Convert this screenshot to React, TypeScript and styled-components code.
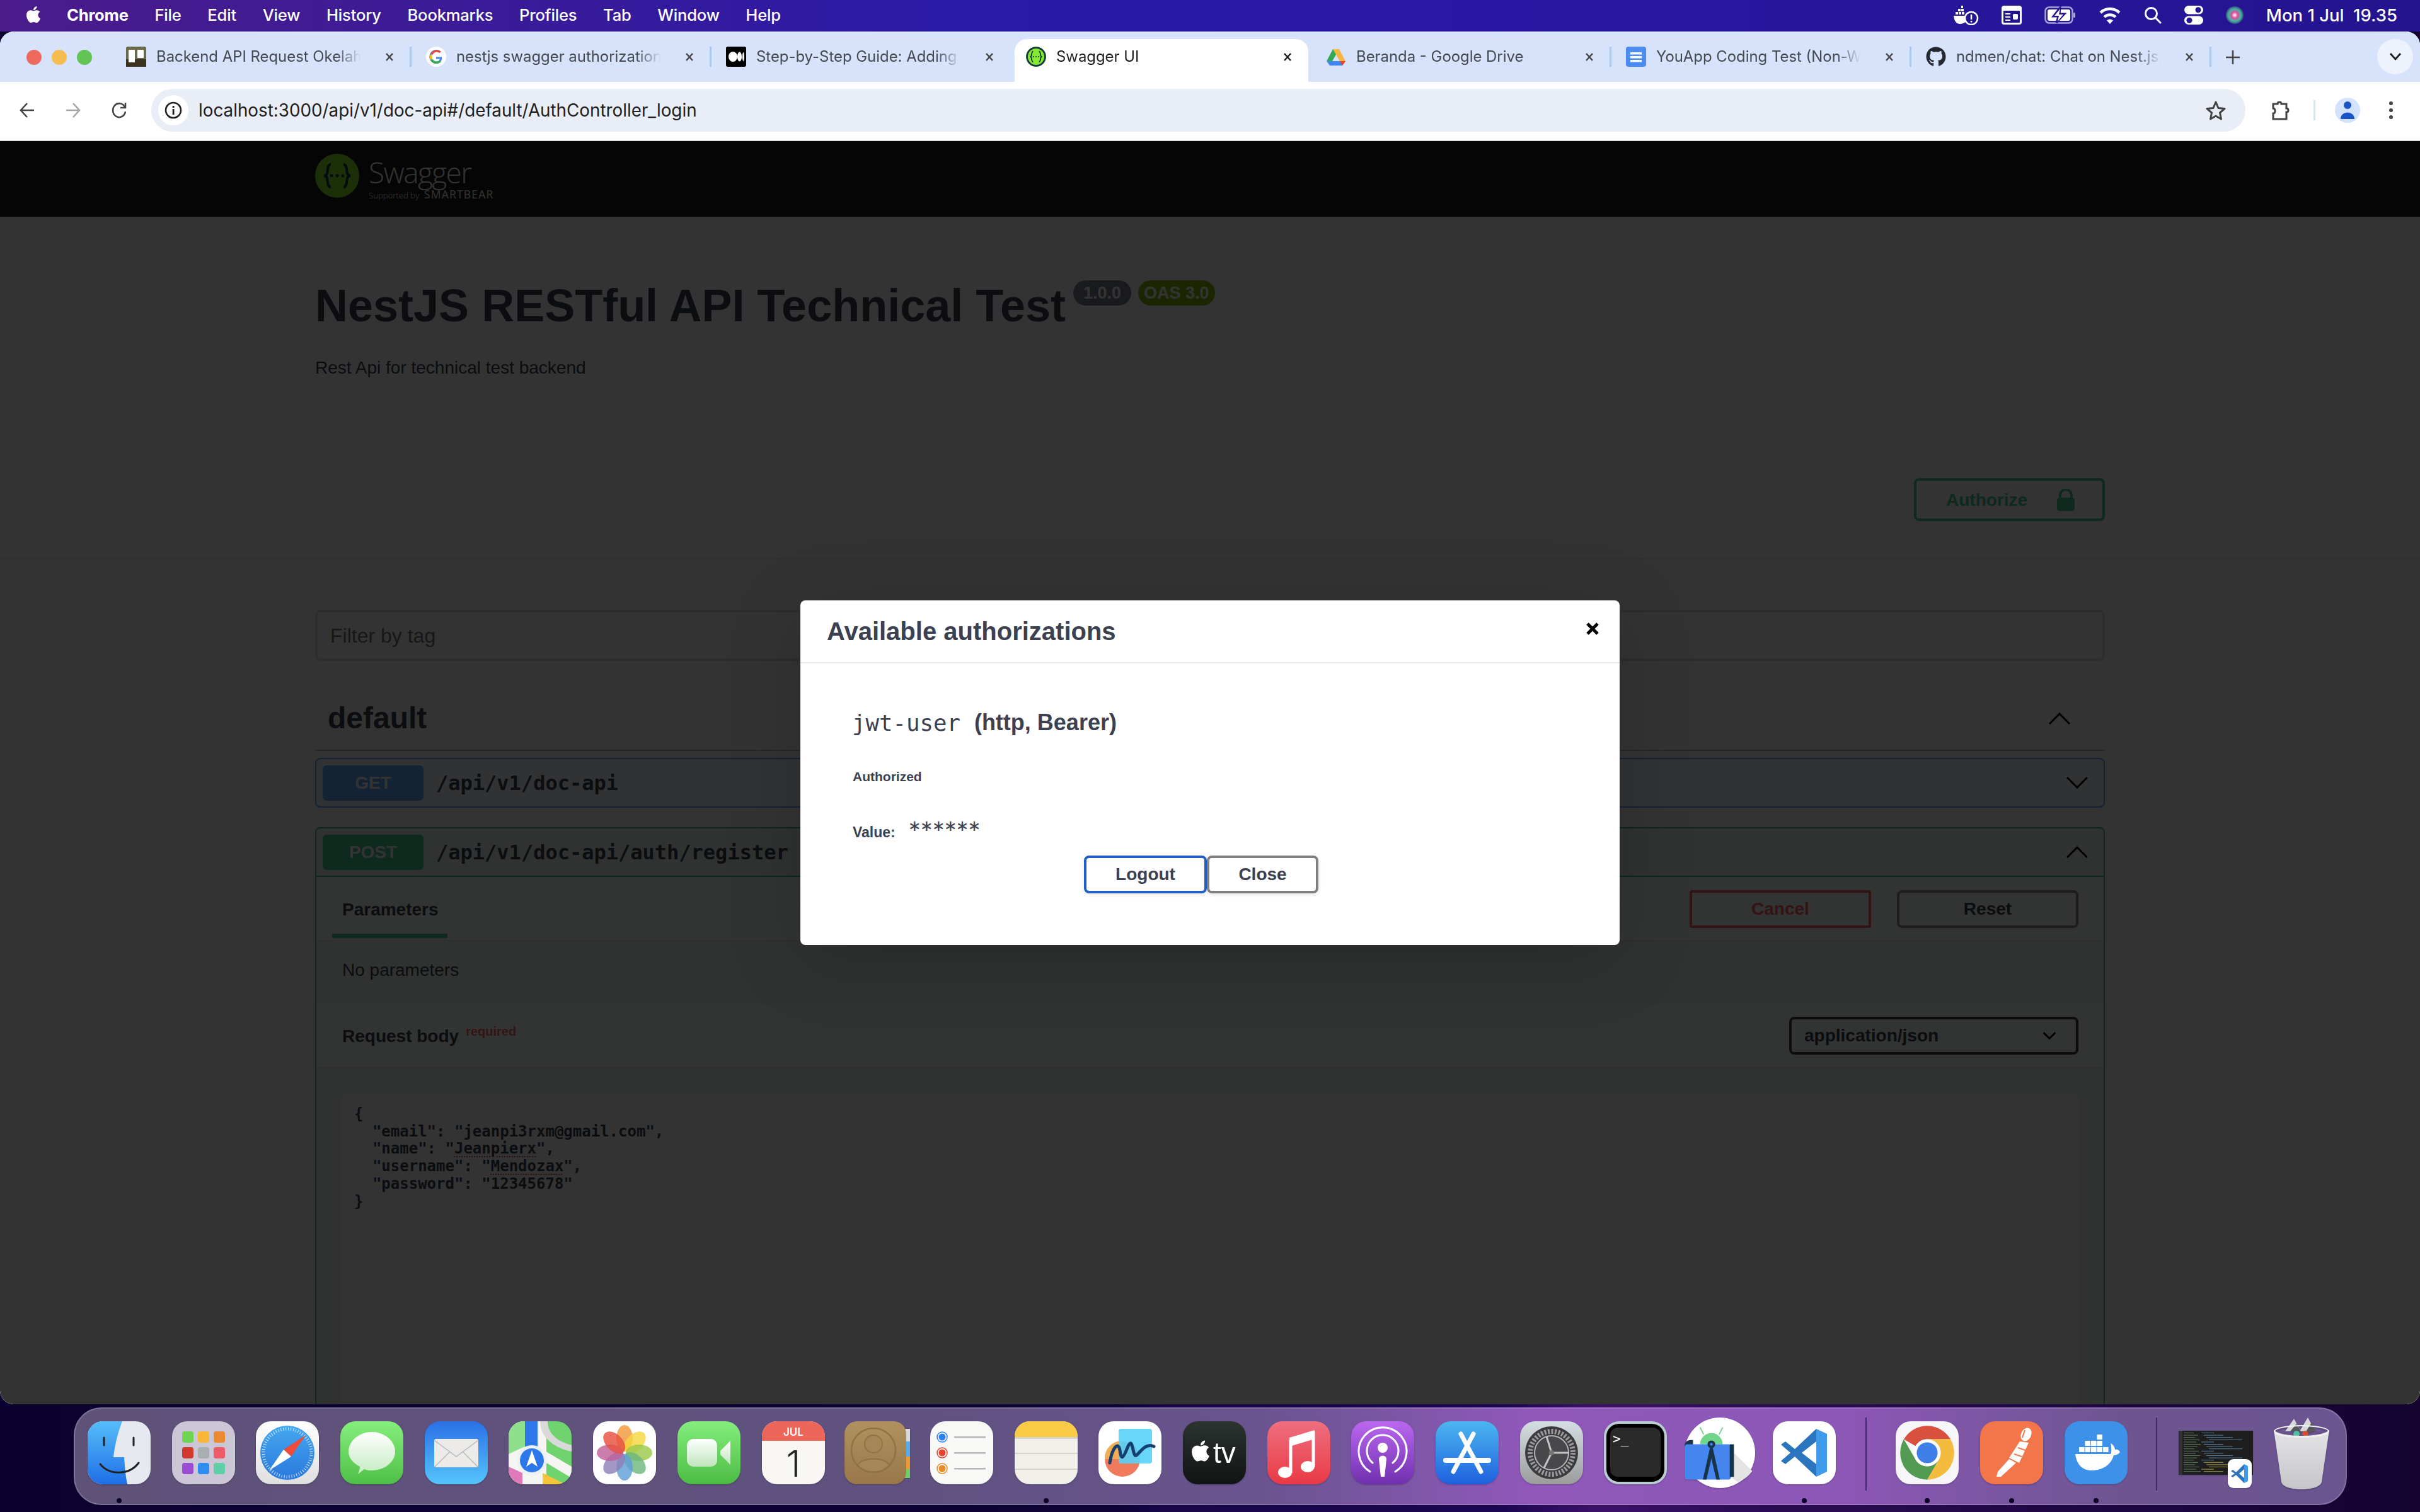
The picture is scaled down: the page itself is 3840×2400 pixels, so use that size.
import React from "react";
import styled, { createGlobalStyle } from "styled-components";
import { FaApple, FaGithub } from "react-icons/fa";

const Global = createGlobalStyle`
  html, body { margin: 0; padding: 0; background: #0c0230; }
  * { box-sizing: border-box; }
`;
const SANS = `"Liberation Sans", Arial, sans-serif`;
const UI = `Inter, "Liberation Sans", sans-serif`;
const MONO = `"DejaVu Sans Mono", "Liberation Mono", monospace`;

const Desktop = styled.div`
  width: 3840px; height: 2400px; overflow: hidden; display: flex; flex-direction: column;
  background: linear-gradient(90deg, #0b0230 0%, #0d0335 46%, #170648 48%, #1a0750 62%, #3c1168 66%, #2c0c55 72%, #1a0640 90%, #14042f 100%);
`;
const MenuBar = styled.header`
  height: 50px; flex: none; display: flex; align-items: center; padding: 0 36px 3px 40px; color: #fff;
  font: 500 25.6px ${UI};
  background: linear-gradient(90deg, #4b1b8a 0%, #3a1b99 20%, #2a1aa6 40%, #2a18a5 60%, #24148f 100%);
`;
const AppleMark = styled.span` width: 26px; height: 32px; display: flex; margin-right: 40px; font-size: 30px; `;
const MenuItems = styled.nav` display: flex; gap: 41.7px; letter-spacing: -0.2px; `;
const MenuItem = styled.span<{ $strong?: boolean }>` font-weight: ${p => (p.$strong ? 700 : 500)}; `;
const StatusArea = styled.div` margin-left: auto; display: flex; align-items: center; gap: 36px; `;
const Clock = styled.span` white-space: pre; font-size: 27.5px; `;
const StatusSvg = styled.svg` display: block; flex: none; `;

const Window = styled.div`
  height: 2179px; flex: none; display: flex; flex-direction: column; overflow: hidden;
  border-radius: 22px 22px 22px 22px; background: #fff;
`;
const TabStrip = styled.div`
  height: 80px; flex: none; display: flex; align-items: flex-start; background: #d6e3fb; padding: 12px 0 0 42px;
`;
const Lights = styled.div` width: 135px; height: 58px; display: flex; gap: 16px; align-items: center; `;
const Light = styled.span<{ $c: string }>` width: 24px; height: 24px; border-radius: 50%; background: ${p => p.$c}; `;
const Tab = styled.div<{ $active?: boolean }>`
  flex: none; height: 68px; display: flex; align-items: flex-start; padding-top: 12px;
  width: ${p => (p.$active ? "466px" : "476px")};
  padding-left: ${p => (p.$active ? "18px" : "23px")};
  margin: ${p => (p.$active ? "0 5px 0 5px" : "0")};
  background: ${p => (p.$active ? "#fff" : "transparent")};
  border-radius: 20px 20px 0 0;
  color: ${p => (p.$active ? "#1f1f1f" : "#454a52")};
  font: 400 23.9px/32px ${UI};
`;
const Favicon = styled.span` width: 32px; height: 32px; flex: none; display: block; `;
const TabTitle = styled.span`
  width: 325px; margin-left: 16px; white-space: nowrap; overflow: hidden; flex: none;
  -webkit-mask-image: linear-gradient(90deg, #000 88%, transparent 100%);
  mask-image: linear-gradient(90deg, #000 88%, transparent 100%);
`;
const TabClose = styled.svg<{ $ml: number }>` width: 20px; height: 32px; margin-left: ${p => p.$ml}px; flex: none; `;
const TabSep = styled.span` width: 3px; height: 32px; margin-left: auto; background: #aac7f2; flex: none; `;
const NewTab = styled.svg` width: 24px; height: 32px; margin: 12px 0 0 22px; flex: none; `;
const TabSearch = styled.div`
  margin: 0 11px 0 auto; width: 57px; height: 56px; border-radius: 28px; background: #edf2fc;
  display: flex; align-items: center; justify-content: center;
`;
const Toolbar = styled.div`
  height: 94px; flex: none; display: flex; align-items: center; padding: 0 32px 2px 31px;
  background: #fff; border-bottom: 2px solid #e1e1e1;
`;
const ToolIcon = styled.svg<{ $ml?: number }>` flex: none; display: block; margin-left: ${p => p.$ml ?? 0}px; `;
const AddressBar = styled.div`
  margin-left: 39px; width: 3323px; height: 68px; border-radius: 34px; background: #e9edf6; flex: none;
  display: flex; align-items: center; padding: 0 30px 0 11px;
`;
const InfoPill = styled.span`
  width: 48px; height: 48px; border-radius: 50%; background: #fff; flex: none;
  display: flex; align-items: center; justify-content: center;
`;
const Url = styled.span` margin-left: 16px; font: 400 27.8px ${UI}; color: #1f1f1f; flex: 1; white-space: nowrap; `;
const VSep = styled.span` width: 3px; height: 32px; background: #d3e3fd; margin-left: 38px; flex: none; `;
const Avatar = styled.span`
  width: 40px; height: 40px; border-radius: 50%; background: #d3e3fd; margin-left: 31px; flex: none;
  display: flex; align-items: center; justify-content: center;
`;

const Page = styled.main` flex: 1; position: relative; overflow: hidden; background: #fff; font-family: ${SANS}; color: #3b4151; `;
const TopBar = styled.div` height: 120px; background: #1b1b1b; `;
const Wrap = styled.div` width: 2840px; margin: 0 auto; `;
const TopBarInner = styled(Wrap)` display: flex; padding-top: 20px; `;
const LogoWords = styled.div` margin-left: 15px; display: flex; flex-direction: column; color: #fff; font-family: "Open Sans", sans-serif; font-weight: 300; padding-top: 4px; `;
const LogoName = styled.span` font-size: 46px; line-height: 50px; letter-spacing: -1.6px; `;
const LogoSub = styled.span` display: flex; align-items: baseline; gap: 8px; font-size: 13.5px; line-height: 20px; letter-spacing: -0.2px; `;
const LogoBrand = styled.span` font-size: 17.5px; letter-spacing: 1.2px; font-weight: 400; `;
const TitleRow = styled.div` display: flex; align-items: flex-start; padding-top: 101px; `;
const Title = styled.h2` margin: 0; font: 700 72px/80px ${SANS}; color: #3b4151; `;
const Badge = styled.span<{ $bg: string; $pad: number; $ml: number }>`
  height: 40px; border-radius: 20px; background: ${p => p.$bg}; color: #fff; font: 700 27px/40px ${SANS};
  padding: 0 ${p => p.$pad}px; margin-left: ${p => p.$ml}px;
`;
const Desc = styled.p` margin: 39px 0 0; font: 400 28px/40px ${SANS}; color: #3b4151; `;
const Schemes = styled.section` height: 284px; padding-top: 155px; border-bottom: 2px solid #efefef; `;
const SchemesInner = styled(Wrap)` display: flex; justify-content: flex-end; `;
const AuthorizeBtn = styled.div`
  width: 303px; height: 68px; border: 4px solid #49cc90; border-radius: 8px; color: #49cc90;
  font: 700 28px ${SANS}; display: flex; align-items: center; padding: 2px 0 0 47px;
`;
const AuthLock = styled.svg` margin-left: 46px; flex: none; `;
const Filter = styled.div`
  margin-top: 80px; height: 81px; border: 4px solid #dfe2e8; border-radius: 8px; padding: 2px 0 0 20px;
  display: flex; align-items: center; font: 400 32px ${SANS}; color: #757575;
`;
const TagRow = styled.div`
  display: flex; justify-content: space-between; align-items: center; padding: 64px 55px 23px 20px;
  border-bottom: 2px solid #c4c6cb; height: 143px;
`;
const TagName = styled.h3` margin: 0; font: 700 48px/56px ${SANS}; `;
const Op = styled.section<{ $c: string; $tint: string; $mt: number }>`
  margin-top: ${p => p.$mt}px; border: 2px solid ${p => p.$c}; border-radius: 8px; background: ${p => p.$tint};
`;
const OpSummary = styled.div<{ $c?: string }>`
  height: ${p => (p.$c ? 77 : 75)}px; display: flex; align-items: center; padding: 0 25px 0 10px;
  border-bottom: ${p => (p.$c ? `2px solid ${p.$c}` : "none")};
`;
const Method = styled.span<{ $bg: string }>`
  width: 160px; height: 56px; border-radius: 6px; background: ${p => p.$bg}; color: #fff;
  font: 700 28px/56px ${SANS}; text-align: center;
`;
const OpPath = styled.span` margin-left: 20px; font: 700 32px ${MONO}; flex: 1; `;
const SectionHead = styled.div`
  height: 102px; background: rgba(255,255,255,.8); display: flex; padding-right: 40px; border-bottom: 2px solid #e8ebe9;
`;
const ParamTab = styled.div`
  margin-left: 25px; width: 183px; height: 97px; border-bottom: 7px solid #49cc90; padding: 14px 0 0 16px;
  font: 700 28px/76px ${SANS};
`;
const BtnGroup = styled.div` margin-left: auto; padding-top: 21px; display: flex; gap: 41px; `;
const OutlineBtn = styled.div<{ $c: string; $text: string; $r: number }>`
  width: 288px; height: 60px; border: 4px solid ${p => p.$c}; border-radius: ${p => p.$r}px; color: ${p => p.$text};
  font: 700 28px/52px ${SANS}; text-align: center;
`;
const NoParams = styled.div` height: 100px; padding: 26px 0 0 41px; font: 400 28px/40px ${SANS}; `;
const BodyHead = styled(SectionHead)` align-items: center; padding-left: 41px; justify-content: space-between; `;
const BodyTitle = styled.div` display: flex; align-items: flex-start; padding-top: 2px; `;
const BodyLabel = styled.span` font: 700 28px/40px ${SANS}; `;
const Required = styled.span` margin-left: 11px; font: 700 20px/24px ${SANS}; color: rgba(255,0,0,.6); `;
const SelectBox = styled.div`
  width: 459px; height: 60px; border: 4px solid #41444e; border-radius: 8px; padding: 0 32px 0 20px;
  display: flex; align-items: center; justify-content: space-between; font: 700 28px ${SANS};
`;
const CodeArea = styled.pre`
  margin: 40px 40px 0 39px; height: 900px; border-radius: 8px; background: #fff; padding: 19px 21px;
  font: 700 24px/27.7px ${MONO}; color: #3b4151;
`;
const Spell = styled.span` text-decoration: underline dotted #e04040 2px; text-underline-offset: 4px; `;
const Overlay = styled.div`
  position: absolute; inset: 0; background: rgba(0,0,0,.8); display: flex; align-items: center; justify-content: center;
`;
const Modal = styled.div`
  width: 1300px; background: #fff; border-radius: 8px; box-shadow: 0 20px 120px rgba(0,0,0,.18); padding-bottom: 82px;
`;
const ModalHead = styled.div`
  height: 100px; padding: 0 33px 0 42px; border-bottom: 2px solid #ebebeb; display: flex; align-items: center; justify-content: space-between;
`;
const ModalClose = styled.svg` flex: none; margin-top: -8px; `;
const ModalTitle = styled.h4` margin: 0; font: 700 40px ${SANS}; color: #3b4151; `;
const ModalBody = styled.div` padding: 72px 111px 0 83px; color: #3b4151; `;
const Scheme = styled.div` display: flex; align-items: center; height: 44px; gap: 22px; font: 700 36px/44px ${SANS}; `;
const SchemeName = styled.code` font: 400 35.7px ${MONO}; margin-left: -1px; `;
const AuthState = styled.div` margin-top: 52px; font: 700 21px/24px ${SANS}; `;
const ValueRow = styled.div` margin-top: 48px; display: flex; align-items: flex-start; gap: 21px; `;
const ValueLabel = styled.span` margin-top: 15px; font: 700 23px/26px ${SANS}; `;
const ValueStars = styled.code` font: 500 31.5px/36px ${MONO}; margin-top: 5px; -webkit-text-stroke: 0.5px #3b4151; `;
const ModalBtns = styled.div` margin-top: 24px; display: flex; justify-content: center; `;
const ModalBtn = styled.div<{ $c: string; $w: number }>`
  width: ${p => p.$w}px; height: 60px; border: 4px solid ${p => p.$c}; border-radius: 8px; background: #fff;
  font: 700 28px/52px ${SANS}; text-align: center; box-shadow: 0 2px 6px rgba(0,0,0,.1);
`;

const Dock = styled.footer`
  margin: 5px 0 0 117px; width: 3607px; height: 155px; flex: none; display: flex; align-items: flex-start; gap: 33.7px;
  padding: 20px 0 0 20px; border: 2px solid rgba(255,255,255,.18); border-radius: 44px;
  background: linear-gradient(90deg, #5f5279 0%, #60527f 36%, #69548f 52%, #8f58ba 64%, #8c57b6 78%, #6e5592 90%, #6a5590 100%);
`;
const DockItem = styled.div<{ $w?: number }>`
  width: ${p => p.$w ?? 100}px; height: 100px; flex: none; position: relative; display: flex; align-items: center; justify-content: center;
`;
const DockDot = styled.span` position: absolute; top: 122px; left: calc(50% - 4px); width: 8px; height: 8px; border-radius: 50%; background: #0a0226; `;
const DockSep = styled.span<{ $l: number; $r: number }>` width: 2px; height: 116px; margin: -6px ${p => p.$r}px 0 ${p => p.$l}px; background: #3b2a6e; flex: none; `;
const IconSvg = styled.svg<{ $w?: number; $h?: number }>`
  width: ${p => p.$w ?? 100}px; height: ${p => p.$h ?? 100}px; flex: none; display: block; overflow: visible;
  filter: drop-shadow(0 1px 1px rgba(0,0,0,.25));
`;
const ChevronSvg = styled.svg` display: block; flex: none; `;

const Vb: React.FC<{ children: React.ReactNode; w?: number; h?: number; vb?: string }> = ({ children, w, h, vb }) => (
  <IconSvg $w={w} $h={h} viewBox={vb ?? "0 0 100 100"}>{children}</IconSvg>
);
const Grad: React.FC<{ id: string; a: string; b: string; h?: boolean }> = ({ id, a, b, h }) => (
  <linearGradient id={id} x1="0" y1="0" x2={h ? "1" : "0"} y2={h ? "0" : "1"}><stop offset="0" stopColor={a} /><stop offset="1" stopColor={b} /></linearGradient>
);

const Finder = () => (
  <Vb><defs><Grad id="fb" a="#55bdf8" b="#1f6fe8" /></defs>
    <rect width="100" height="100" rx="24" fill="#e6e9ef" />
    <path d="M24 0H55C48 18 43 38 41 57H58C59 72 60 86 63 100H24A24 24 0 0 1 0 76V24A24 24 0 0 1 24 0Z" fill="url(#fb)" />
    <path d="M26 26V38M73 26V38" stroke="#222" strokeWidth="3" strokeLinecap="round" />
    <path d="M20 68C34 86 66 86 81 66" stroke="#222" strokeWidth="3" fill="none" strokeLinecap="round" />
  </Vb>
);
const Launchpad = () => {
  const c = ["#6fd44f", "#f7b838", "#ec8a30", "#d03a2c", "#a9aeb2", "#ee5a6a", "#9a4cd2", "#2f8cf0", "#5fcfa8"];
  return (
    <Vb><rect width="100" height="100" rx="24" fill="#cbc7d6" />
      {c.map((f, i) => <rect key={f} x={16 + (i % 3) * 25} y={16 + Math.floor(i / 3) * 25} width="18" height="18" rx="4" fill={f} />)}
    </Vb>
  );
};
const Safari = () => (
  <Vb><defs><Grad id="sf" a="#ffffff" b="#dfdfdf" /><Grad id="sb" a="#45a8f0" b="#2a78dc" /></defs>
    <rect width="100" height="100" rx="24" fill="url(#sf)" />
    <circle cx="50" cy="50" r="43" fill="url(#sb)" />
    <circle cx="50" cy="50" r="38" fill="none" stroke="#fff" strokeWidth="5" strokeDasharray="1 3" opacity=".8" />
    <path d="M79 22 56 56 44 45Z" fill="#ee4b3a" /><path d="M21 78 44 45 56 56Z" fill="#fff" />
  </Vb>
);
const Messages = () => (
  <Vb><defs><Grad id="mg" a="#86ef7c" b="#4fbf47" /><Grad id="mw" a="#ffffff" b="#c4ecc0" /></defs>
    <rect width="100" height="100" rx="24" fill="url(#mg)" />
    <path d="M50 17C71 17 87 32 87 48S71 78 50 78C46 78 42 78 38 76L28 84C30 79 31 75 31 72 20 66 13 58 13 48 13 32 29 17 50 17Z" fill="url(#mw)" />
  </Vb>
);
const Mail = () => (
  <Vb><defs><Grad id="ml" a="#2a6fe6" b="#55c5fb" /></defs>
    <rect width="100" height="100" rx="24" fill="url(#ml)" />
    <rect x="15" y="28" width="70" height="45" rx="3" fill="#ecebe9" />
    <path d="M15 30 50 56 85 30M15 73 40 48M85 73 60 48" fill="none" stroke="#b9b9b9" strokeWidth="1.5" />
  </Vb>
);
const Maps = () => (
  <Vb>
    <clipPath id="mpc"><rect width="100" height="100" rx="24" /></clipPath>
    <g clipPath="url(#mpc)">
      <rect width="100" height="100" fill="#6fd46e" />
      <path d="M0 0H60V100H0Z" fill="#f5f5f3" />
      <path d="M0 0H26V40L0 52Z" fill="#8ee08a" />
      <path d="M50 0H62C62 20 78 32 100 38V48C70 42 50 24 50 0Z" fill="#d9d9d9" />
      <path d="M50 60 100 90V72L56 46Z" fill="#f5f5f3" />
      <rect x="26" y="0" width="20" height="48" fill="#2c78ea" />
      <path d="M0 72 22 82V100H0Z" fill="#e078bc" /><path d="M54 82 90 100H54Z" fill="#f7c53c" />
      <circle cx="37" cy="62" r="24" fill="#eef1f4" /><circle cx="37" cy="62" r="19" fill="#2c78ea" />
      <path d="M37 46 46 72 37 66 28 72Z" fill="#fff" />
    </g>
  </Vb>
);
const Photos = () => {
  const c = ["#f0983a", "#f5d63d", "#9bc94a", "#6eb77c", "#5e9fd8", "#8d80b8", "#c0609a", "#e8503f"];
  return (
    <Vb><rect width="100" height="100" rx="24" fill="#fdfdfd" />
      {c.map((f, i) => <ellipse key={f} cx="50" cy="27" rx="13" ry="21" fill={f} opacity=".82" transform={`rotate(${i * 45} 50 50)`} />)}
    </Vb>
  );
};
const FaceTime = () => (
  <Vb><defs><Grad id="ft" a="#84ee7c" b="#4cbc44" /><Grad id="fw" a="#ffffff" b="#bfe6bb" /></defs>
    <rect width="100" height="100" rx="24" fill="url(#ft)" />
    <rect x="15" y="28" width="48" height="44" rx="10" fill="url(#fw)" />
    <path d="M68 47 84 31V69L68 53Z" fill="url(#fw)" />
  </Vb>
);
const Calendar = () => (
  <Vb><clipPath id="cc"><rect width="100" height="100" rx="24" /></clipPath>
    <g clipPath="url(#cc)"><rect width="100" height="100" fill="#f8f7f4" /><rect width="100" height="31" fill="#ec675a" /></g>
    <text x="50" y="23" textAnchor="middle" fill="#fff" fontFamily={UI} fontSize="17" fontWeight="600">JUL</text>
    <text x="50" y="88" textAnchor="middle" fill="#222" fontFamily={UI} fontSize="58" fontWeight="300">1</text>
  </Vb>
);
const Contacts = () => (
  <Vb w={104} vb="0 0 104 100"><defs><Grad id="ct" a="#b0915f" b="#98784a" /></defs>
    <rect x="88" y="12" width="16" height="20" fill="#d8d8d8" /><rect x="88" y="32" width="16" height="24" fill="#5aabea" />
    <rect x="88" y="56" width="16" height="20" fill="#ec9a34" /><rect x="88" y="76" width="16" height="14" fill="#71cf63" />
    <rect width="98" height="100" rx="20" fill="url(#ct)" />
    <circle cx="46" cy="46" r="35" fill="none" stroke="#8f7245" strokeWidth="2.5" /><circle cx="46" cy="36" r="14" fill="#a58657" stroke="#8f7245" strokeWidth="2" />
    <path d="M21 70C26 56 66 56 71 70A35 35 0 0 1 21 70Z" fill="#a58657" stroke="#8f7245" strokeWidth="2" />
  </Vb>
);
const Reminders = () => (
  <Vb><rect width="100" height="100" rx="24" fill="#f8f8f6" />
    {[["#2f7ef0", 25], ["#e8402f", 50], ["#ea8c26", 75]].map(([c, y]) => (
      <g key={c as string}>
        <circle cx="19" cy={y as number} r="8" fill="none" stroke={c as string} strokeWidth="1.5" /><circle cx="19" cy={y as number} r="5.5" fill={c as string} />
        <rect x="38" y={(y as number) - 1} width="50" height="2.5" fill="#b5b5b5" />
      </g>
    ))}
  </Vb>
);
const Notes = () => (
  <Vb><clipPath id="nc"><rect width="100" height="100" rx="24" /></clipPath>
    <g clipPath="url(#nc)"><rect width="100" height="100" fill="#f1efe9" /><rect width="100" height="25" fill="#f8cb45" />
      <rect y="25" width="100" height="3" fill="#d5d2c9" /><rect y="50" width="100" height="2" fill="#d6d3ca" /><rect y="75" width="100" height="2" fill="#d6d3ca" /></g>
  </Vb>
);
const Freeform = () => (
  <Vb><rect width="100" height="100" rx="24" fill="#fff" />
    <circle cx="38" cy="60" r="28" fill="#ef7a5c" /><path d="M30 32A28 28 0 0 1 38 32V60H10A28 28 0 0 1 30 32Z" fill="#f3ae55" />
    <rect x="32" y="12" width="53" height="55" rx="4" fill="#55d3f8" opacity=".9" />
    <path d="M18 66C22 40 32 32 34 46S38 62 46 42 54 50 58 54 72 32 88 40" fill="none" stroke="#143f6e" strokeWidth="5" strokeLinecap="round" />
  </Vb>
);
const TvApp = () => (
  <Vb><defs><Grad id="tv" a="#2c3330" b="#101414" /></defs>
    <rect width="100" height="100" rx="24" fill="url(#tv)" />
    <FaApple x="9" y="28" size={38} color="#fff" />
    <text x="48" y="66" fill="#fff" fontFamily={SANS} fontSize="46">tv</text>
  </Vb>
);
const Music = () => (
  <Vb><defs><Grad id="mu" a="#ef6f7f" b="#e93a45" /></defs>
    <rect width="100" height="100" rx="24" fill="url(#mu)" />
    <path d="M73 16V72" fill="none" stroke="#fff" strokeWidth="5" /><path d="M37 30V82" stroke="#fff" strokeWidth="5" />
    <path d="M35 26 75 14V28L35 40Z" fill="#fff" /><ellipse cx="28" cy="81" rx="11" ry="9" fill="#fff" /><ellipse cx="64" cy="72" rx="11" ry="9" fill="#fff" />
  </Vb>
);
const Podcasts = () => (
  <Vb><defs><Grad id="po" a="#ba68ef" b="#7030ae" /></defs>
    <rect width="100" height="100" rx="24" fill="url(#po)" />
    <g fill="none" stroke="#fff" strokeLinecap="round"><path d="M30 80A38 38 0 1 1 70 80" strokeWidth="3" /><path d="M34 66A25 25 0 1 1 66 66" strokeWidth="3" /></g>
    <circle cx="50" cy="42" r="8" fill="#fff" /><path d="M44 60C44 53 56 53 56 60L53 88H47Z" fill="#fff" />
  </Vb>
);
const AppStore = () => (
  <Vb><defs><Grad id="as" a="#4cb6f0" b="#1e60de" /></defs>
    <rect width="100" height="100" rx="24" fill="url(#as)" />
    <g stroke="#fff" strokeWidth="7" strokeLinecap="round" fill="none"><path d="M60 20 28 80" /><path d="M40 20 72 80" /><path d="M16 62H84" strokeWidth="8" /></g>
  </Vb>
);
const Settings = () => (
  <Vb><defs><Grad id="st" a="#d4dee2" b="#9c9c9c" /></defs>
    <rect width="100" height="100" rx="24" fill="url(#st)" />
    <circle cx="50" cy="50" r="42" fill="#3b3b3d" /><circle cx="50" cy="50" r="34" fill="none" stroke="#9a9a9c" strokeWidth="8" strokeDasharray="3 2.5" />
    <circle cx="50" cy="50" r="27" fill="#48484a" stroke="#b5b5b7" strokeWidth="2" />
    <path d="M50 50 42 24M50 50H78M50 50 38 74" stroke="#c4c4c6" strokeWidth="3" /><circle cx="50" cy="50" r="4" fill="#777" />
  </Vb>
);
const Terminal = () => (
  <Vb><rect width="100" height="100" rx="24" fill="#b9cdd3" /><rect x="4" y="4" width="92" height="92" rx="20" fill="#000" />
    <rect x="10" y="10" width="80" height="78" rx="12" fill="#2a2a2a" />
    <text x="14" y="35" fill="#fff" fontFamily={MONO} fontSize="21">&gt;_</text>
  </Vb>
);
const AndroidStudio = () => (
  <Vb w={112} h={112}>
    <circle cx="50" cy="50" r="50" fill="#fff" />
    <path d="M60 40 96 76A50 50 0 0 1 76 92L60 80Z" fill="#e4e4e4" />
    <path d="M27 24 22 14M49 24 54 14" stroke="#6fd58a" strokeWidth="1.6" />
    <path d="M22 38A16 16 0 0 1 54 38Z" fill="#6fd58a" />
    <path d="M0 40A8 8 0 0 1 8 32H12V44H0Z" fill="#18344a" />
    <rect x="0" y="38" width="66" height="50" rx="4" fill="#4586ee" />
    <path d="M64 38H70V84H64Z" fill="#18344a" />
    <path d="M38 34 26 88H31L38 58 45 88H50Z" fill="#18344a" /><circle cx="38" cy="38" r="5.5" fill="#18344a" /><circle cx="38" cy="38" r="2" fill="#4586ee" />
  </Vb>
);
const VsCode = () => (
  <Vb><rect width="100" height="100" rx="24" fill="#fff" />
    <path d="M69 12 86 20V80L69 88Z" fill="#3f9be9" />
    <path d="M69 12 35 44 20 32 13 37 28 50 13 63 20 68 35 56 69 88V68L46 50 69 32Z" fill="#2a75bd" />
  </Vb>
);
const Chrome = () => (
  <Vb><rect width="100" height="100" rx="24" fill="#f6f5f8" />
    <g transform="translate(50 50) scale(1.07) translate(-50 -50)">
      <path d="M15.4 30A40 40 0 0 1 84.6 30H50A20 20 0 0 0 32.7 40Z" fill="#d9503f" />
      <path d="M84.6 30A40 40 0 0 1 50 90L67.3 60A20 20 0 0 0 50 30Z" fill="#f3bc3e" />
      <path d="M50 90A40 40 0 0 1 15.4 30L32.7 60A20 20 0 0 0 67.3 60Z" fill="#539a52" />
      <circle cx="50" cy="50" r="20" fill="#fff" /><circle cx="50" cy="50" r="15.5" fill="#3f7fe8" />
    </g>
  </Vb>
);
const Postman = () => (
  <Vb><rect width="100" height="100" rx="24" fill="#f2764a" />
    <g fill="#fff"><ellipse cx="73" cy="21" rx="8" ry="11" transform="rotate(25 73 21)" /><path d="M63 32 77 34 62 66 46 58Z" /><path d="M46 60 57 66 33 88 26 88 28 80Z" /></g>
    <path d="M60 42 72 46M54 52 66 56M71 14 67 26" stroke="#f2764a" strokeWidth="2" />
  </Vb>
);
const Docker = () => (
  <Vb><rect width="100" height="100" rx="24" fill="#3e91e8" />
    <g fill="#fff">{[0, 1, 2, 3, 4].map(i => <rect key={i} x={23 + i * 9.5} y="41" width="8.5" height="8" />)}
      {[1, 2, 3].map(i => <rect key={i} x={23 + i * 9.5} y="31" width="8.5" height="8" />)}<rect x="51.5" y="21" width="8.5" height="8" />
      <path d="M17 52H72C75 52 75 44 73 35 77 37 80 41 80 45 84 44 87 46 88 49 85 53 81 54 78 54 74 68 62 78 42 78 28 78 19 68 17 52Z" /></g>
  </Vb>
);
const Thumb = () => (
  <Vb w={118} h={112} vb="0 0 118 112">
    <rect y="21" width="118" height="70" fill="#1e1e1e" />
    <rect y="21" width="6" height="70" fill="#333" />
    {Array.from({ length: 18 }).map((_, i) => (
      <g key={i}>
        <rect x={8} y={24 + i * 3.6} width={16 + (i * 7) % 12} height="1" fill="#5a7a5a" />
        <rect x={36 + (i % 4) * 4} y={24 + i * 3.6} width={20 + (i * 11) % 44} height="1" fill={i > 12 ? "#a89a48" : "#557f9f"} />
      </g>
    ))}
    <rect x="78" y="66" width="38" height="46" rx="9" fill="#fff" />
    <path d="M104 74 110 77V101L104 104Z" fill="#3f9be9" /><path d="M104 74 91 87 86 83 83 85 89 89 83 93 86 95 91 91 104 104V96L96 89 104 82Z" fill="#2a75bd" />
  </Vb>
);
const Trash = () => (
  <Vb w={88} h={116} vb="0 0 88 116"><defs><Grad id="tr" a="#e4e4e6" b="#c6c6c8" /></defs>
    <path d="M18 24 32 4 42 22 54 2 66 24Z" fill="#d8d8d8" /><path d="M26 24 36 12 44 26ZM50 26 60 10 66 24Z" fill="#55565c" /><circle cx="36" cy="28" r="5" fill="#4fc0a0" /><circle cx="50" cy="28" r="5" fill="#d05030" />
    <path d="M0 22C12 34 76 34 88 22L76 104C74 120 14 120 12 104Z" fill="url(#tr)" />
    <ellipse cx="44" cy="24" rx="43" ry="9" fill="none" stroke="#f4f4f4" strokeWidth="2" />
  </Vb>
);

const Chevron: React.FC<{ up?: boolean; w?: number; h?: number; sw?: number }> = ({ up, w = 34, h = 19, sw = 3 }) => (
  <ChevronSvg width={w} height={h} viewBox="0 0 34 19">
    <polyline points={up ? "1,18 17,2 33,18" : "1,1 17,17 33,1"} fill="none" stroke="#000" strokeWidth={sw} />
  </ChevronSvg>
);
const CloseGlyph: React.FC<{ c: string; ml: number }> = ({ c, ml }) => (
  <TabClose $ml={ml} viewBox="0 0 20 32"><path d="M5 11 15 22M15 11 5 22" stroke={c} strokeWidth="2.4" fill="none" /></TabClose>
);
const SwaggerBadge: React.FC<{ size: number }> = ({ size }) => (
  <ChevronSvg width={size} height={size} viewBox="0 0 70 70">
    <circle cx="35" cy="35" r="35" fill="#85ea2d" /><circle cx="35" cy="35" r="31.5" fill="#85ea2d" stroke="#173647" strokeWidth={size < 40 ? 6 : 0} />
    <path d="M25 17C18 17 21 30 18 33 16 35 14 35 14 35S16 35 18 37C21 40 18 53 25 53M45 17C52 17 49 30 52 33 54 35 56 35 56 35S54 35 52 37C49 40 52 53 45 53" fill="none" stroke="#173647" strokeWidth="4" />
    <circle cx="26" cy="35" r="2.4" fill="#173647" /><circle cx="35" cy="35" r="2.4" fill="#173647" /><circle cx="44" cy="35" r="2.4" fill="#173647" />
  </ChevronSvg>
);

type TabDef = { title: string; icon: React.ReactNode; sep?: boolean; active?: boolean };
const tabs: TabDef[] = [
  { title: "Backend API Request Okelah", sep: true, icon: (
    <svg width="32" height="32" viewBox="0 0 32 32"><rect width="32" height="32" rx="3" fill="#6b6a4a" /><rect y="20" width="32" height="12" fill="#3d3220" /><rect x="4" y="5" width="10" height="20" rx="1" fill="#fff" /><rect x="18" y="5" width="10" height="13" rx="1" fill="#fff" /></svg>
  ) },
  { title: "nestjs swagger authorization", sep: true, icon: (
    <svg width="32" height="32" viewBox="0 0 32 32"><circle cx="16" cy="16" r="16" fill="#fff" /><path d="M25 16.5H16V19.5H22C21 22.5 19 24 16 24A8 8 0 1 1 21.4 10L23.6 7.8A11 11 0 1 0 16 27C22.5 27 26 22 25 16.5Z" fill="#4285f4" /><path d="M7.5 11 10.5 13A7 7 0 0 1 21.4 10L23.6 7.8A11 11 0 0 0 7.5 11Z" fill="#ea4335" /><path d="M7 21 10 19A7 7 0 0 1 9.6 14L7 12A11 11 0 0 0 7 21Z" fill="#fbbc05" /><path d="M7 21.5 10 19.5A8 8 0 0 0 21.5 22L24 24A11 11 0 0 1 7 21.5Z" fill="#34a853" /></svg>
  ) },
  { title: "Step-by-Step Guide: Adding (", icon: (
    <svg width="32" height="32" viewBox="0 0 32 32"><rect width="32" height="32" rx="3" fill="#000" /><ellipse cx="11" cy="16" rx="7" ry="8" fill="#fff" /><ellipse cx="21.5" cy="16" rx="3.5" ry="7.5" fill="#fff" /><ellipse cx="27.5" cy="16" rx="1.5" ry="7" fill="#fff" /></svg>
  ) },
  { title: "Swagger UI", active: true, icon: <SwaggerBadge size={32} /> },
  { title: "Beranda - Google Drive", sep: true, icon: (
    <svg width="32" height="32" viewBox="0 0 32 32"><path d="M11 3H21L10 22H1Z" fill="#34a853" transform="translate(0 1)" /><path d="M21 4 31 23H22L11 4Z" fill="#f4b63f" /><path d="M1 23H31L26 30H6Z" fill="#4285f4" /><path d="M22 23H31L26 30Z" fill="#ea4335" /></svg>
  ) },
  { title: "YouApp Coding Test (Non-We", sep: true, icon: (
    <svg width="32" height="32" viewBox="0 0 32 32"><rect width="32" height="32" rx="4" fill="#4c8bf0" /><rect x="7" y="9" width="18" height="3.5" fill="#fff" /><rect x="7" y="15" width="18" height="3.5" fill="#fff" /><rect x="7" y="21" width="18" height="3.5" fill="#fff" /></svg>
  ) },
  { title: "ndmen/chat: Chat on Nest.js,", sep: true, icon: <FaGithub size={32} color="#24292f" /> },
];
const dockIcons: { el: React.ReactNode; dot?: boolean; w?: number; sep?: [number, number] }[] = [
  { el: <Finder />, dot: true }, { el: <Launchpad /> }, { el: <Safari /> }, { el: <Messages /> }, { el: <Mail /> }, { el: <Maps /> }, { el: <Photos /> },
  { el: <FaceTime /> }, { el: <Calendar /> }, { el: <Contacts /> }, { el: <Reminders /> }, { el: <Notes />, dot: true }, { el: <Freeform /> }, { el: <TvApp /> },
  { el: <Music /> }, { el: <Podcasts /> }, { el: <AppStore /> }, { el: <Settings /> }, { el: <Terminal /> }, { el: <AndroidStudio /> }, { el: <VsCode />, dot: true },
  { el: <Chrome />, dot: true, sep: [14, 12] }, { el: <Postman />, dot: true }, { el: <Docker />, dot: true },
  { el: <Thumb />, w: 116, sep: [12, 1] }, { el: <Trash />, w: 88 },
];

const App: React.FC = () => (
  <Desktop>
    <Global />
    <MenuBar>
      <AppleMark><FaApple /></AppleMark>
      <MenuItems>
        <MenuItem $strong>Chrome</MenuItem>
        {["File", "Edit", "View", "History", "Bookmarks", "Profiles", "Tab", "Window", "Help"].map(m => <MenuItem key={m}>{m}</MenuItem>)}
      </MenuItems>
      <StatusArea>
        <StatusSvg width="40" height="32" viewBox="0 0 40 32" fill="#fff"><rect x="12" y="1" width="3" height="4" /><rect x="7" y="6" width="4" height="4" /><rect x="12" y="6" width="4" height="4" /><rect x="3" y="11" width="4" height="4" /><rect x="8" y="11" width="4" height="4" /><rect x="13" y="11" width="4" height="4" /><path d="M0 17H24C23 25 17 30 10 30 4 30 1 25 0 17Z" /><circle cx="28" cy="21" r="10" fill="#25148f" stroke="#fff" strokeWidth="2.5" /><rect x="26.8" y="15" width="2.5" height="8" /><rect x="26.8" y="25" width="2.5" height="2.5" /></StatusSvg>
        <StatusSvg width="32" height="30" viewBox="0 0 32 30"><rect width="32" height="30" rx="4" fill="#fff" /><rect x="3" y="8" width="26" height="19" rx="1" fill="#25148f" /><rect x="6" y="12" width="8" height="2" fill="#fff" /><rect x="6" y="17" width="8" height="2" fill="#fff" /><rect x="6" y="22" width="8" height="2" fill="#fff" /><rect x="18" y="13" width="8" height="9" rx="2" fill="#fff" /></StatusSvg>
        <StatusSvg width="50" height="28" viewBox="0 0 50 28"><rect x="1.5" y="1.5" width="43" height="25" rx="6" fill="none" stroke="#fff" strokeWidth="2.5" opacity=".6" /><rect x="5" y="5" width="36" height="18" rx="3" fill="#fff" /><path d="M25 2 14 16H22L19 26 32 12H24Z" fill="#25148f" stroke="#25148f" strokeWidth="3" /><path d="M25 4 16 15H23L21 24 30 13H23Z" fill="#fff" /><rect x="46" y="10" width="3" height="8" rx="1.5" fill="#fff" opacity=".6" /></StatusSvg>
        <StatusSvg width="36" height="28" viewBox="0 0 36 28" fill="none" stroke="#fff" strokeWidth="4.5"><path d="M3 10A22 22 0 0 1 33 10" /><path d="M9 17A13 13 0 0 1 27 17" /><path d="M18 28 13 22.5A7 7 0 0 1 23 22.5Z" fill="#fff" stroke="none" /></StatusSvg>
        <StatusSvg width="28" height="28" viewBox="0 0 28 28" fill="none" stroke="#fff" strokeWidth="3"><circle cx="11.5" cy="11.5" r="9" /><path d="M18 18 26 26" strokeLinecap="round" /></StatusSvg>
        <StatusSvg width="30" height="30" viewBox="0 0 30 30"><rect width="30" height="13.5" rx="6.7" fill="#fff" /><circle cx="22" cy="6.7" r="4.5" fill="#25148f" /><rect y="16.5" width="30" height="13.5" rx="6.7" fill="#fff" /><circle cx="8" cy="23.2" r="4.5" fill="#25148f" /></StatusSvg>
        <StatusSvg width="28" height="28" viewBox="0 0 28 28"><defs><radialGradient id="si"><stop offset="0" stopColor="#fff" /><stop offset=".35" stopColor="#e04b9a" /><stop offset=".7" stopColor="#3fb8a8" /><stop offset="1" stopColor="#3a4a7a" /></radialGradient></defs><circle cx="14" cy="14" r="14" fill="url(#si)" /></StatusSvg>
        <Clock>Mon 1 Jul  19.35</Clock>
      </StatusArea>
    </MenuBar>

    <Window>
      <TabStrip>
        <Lights><Light $c="#ee6a5f" /><Light $c="#f5bd4f" /><Light $c="#61c454" /></Lights>
        {tabs.map(t => (
          <Tab key={t.title} $active={t.active}>
            <Favicon>{t.icon}</Favicon>
            <TabTitle>{t.title}</TabTitle>
            <CloseGlyph c={t.active ? "#1a1a1a" : "#444"} ml={t.active ? 32 : 35} />
            {t.sep && <TabSep />}
          </Tab>
        ))}
        <NewTab viewBox="0 0 24 32"><path d="M12 6V28M1 17H23" stroke="#444" strokeWidth="2.6" /></NewTab>
        <TabSearch><svg width="20" height="14" viewBox="0 0 20 14"><path d="M2 2 10 11 18 2" fill="none" stroke="#1f1f1f" strokeWidth="2.8" /></svg></TabSearch>
      </TabStrip>
      <Toolbar>
        <ToolIcon width="24" height="28" viewBox="0 0 24 28" fill="none" stroke="#444" strokeWidth="2.6"><path d="M23 14H3M12 3 2 14 12 25" /></ToolIcon>
        <ToolIcon $ml={49} width="24" height="28" viewBox="0 0 24 28" fill="none" stroke="#a6a6a6" strokeWidth="2.6"><path d="M1 14H21M12 3 22 14 12 25" /></ToolIcon>
        <ToolIcon $ml={49} width="24" height="28" viewBox="0 0 24 28" fill="none" stroke="#444" strokeWidth="2.6"><path d="M21 9A10 11 0 1 0 22 16" /><path d="M22 2V10H14" strokeWidth="2.6" /></ToolIcon>
        <AddressBar>
          <InfoPill><svg width="28" height="28" viewBox="0 0 28 28"><circle cx="14" cy="14" r="12" fill="none" stroke="#1f1f1f" strokeWidth="2.6" /><rect x="12.7" y="12" width="2.8" height="9" fill="#1f1f1f" /><rect x="12.7" y="7" width="2.8" height="3" fill="#1f1f1f" /></svg></InfoPill>
          <Url>localhost:3000/api/v1/doc-api#/default/AuthController_login</Url>
          <ToolIcon width="34" height="32" viewBox="0 0 34 32"><path d="M17 3 21 12.5 31 13.5 23.5 20 25.5 30 17 25 8.5 30 10.5 20 3 13.5 13 12.5Z" fill="none" stroke="#444" strokeWidth="3" strokeLinejoin="round" /></ToolIcon>
        </AddressBar>
        <ToolIcon $ml={40} width="30" height="34" viewBox="0 0 30 34" fill="none" stroke="#444" strokeWidth="3"><path d="M4 7H11C11 3 17 3 17 7H25V14C29 14 29 20 25 20V31H4V22C8 22 8 14 4 14Z" /></ToolIcon>
        <VSep />
        <Avatar><svg width="26" height="32" viewBox="0 0 26 32" fill="#1a55c8"><circle cx="13" cy="8" r="6" /><path d="M2 30C2 16 24 16 24 30Z" /></svg></Avatar>
        <ToolIcon $ml={44} width="10" height="32" viewBox="0 0 10 32" fill="#444"><circle cx="5" cy="5" r="3" /><circle cx="5" cy="16" r="3" /><circle cx="5" cy="27" r="3" /></ToolIcon>
      </Toolbar>

      <Page>
        <TopBar>
          <TopBarInner>
            <SwaggerBadge size={70} />
            <LogoWords>
              <LogoName>Swagger</LogoName>
              <LogoSub>Supported by <LogoBrand>SMARTBEAR</LogoBrand></LogoSub>
            </LogoWords>
          </TopBarInner>
        </TopBar>
        <Wrap>
          <TitleRow>
            <Title>NestJS RESTful API Technical Test</Title>
            <Badge $bg="#7d8492" $pad={16} $ml={12}>1.0.0</Badge>
            <Badge $bg="#89bf04" $pad={9} $ml={11}>OAS 3.0</Badge>
          </TitleRow>
          <Desc>Rest Api for technical test backend</Desc>
        </Wrap>
        <Schemes>
          <SchemesInner>
            <AuthorizeBtn>Authorize
              <AuthLock width="30" height="36" viewBox="0 0 30 36"><path d="M6 15V10A9 9 0 0 1 24 10V15" fill="none" stroke="#49cc90" strokeWidth="4" /><rect x="1" y="14" width="28" height="21" rx="4" fill="#49cc90" /></AuthLock>
            </AuthorizeBtn>
          </SchemesInner>
        </Schemes>
        <Wrap>
          <Filter>Filter by tag</Filter>
          <TagRow><TagName>default</TagName><Chevron up /></TagRow>
          <Op $c="#61affe" $tint="rgba(97,175,254,.1)" $mt={11}>
            <OpSummary><Method $bg="#61affe">GET</Method><OpPath>/api/v1/doc-api</OpPath><Chevron /></OpSummary>
          </Op>
          <Op $c="#49cc90" $tint="rgba(73,204,144,.1)" $mt={31}>
            <OpSummary $c="#49cc90"><Method $bg="#49cc90">POST</Method><OpPath>/api/v1/doc-api/auth/register</OpPath><Chevron up /></OpSummary>
            <SectionHead>
              <ParamTab>Parameters</ParamTab>
              <BtnGroup>
                <OutlineBtn $c="#ff6060" $text="#ff6060" $r={4}>Cancel</OutlineBtn>
                <OutlineBtn $c="#909090" $text="#3b4151" $r={8}>Reset</OutlineBtn>
              </BtnGroup>
            </SectionHead>
            <NoParams>No parameters</NoParams>
            <BodyHead>
              <BodyTitle><BodyLabel>Request body</BodyLabel><Required>required</Required></BodyTitle>
              <SelectBox>application/json<Chevron w={20} h={12} sw={5} /></SelectBox>
            </BodyHead>
            <CodeArea>{"{\n  \"email\": \"jeanpi3rxm@gmail.com\",\n  \"name\": \""}<Spell>Jeanpierx</Spell>{"\",\n  \"username\": \""}<Spell>Mendozax</Spell>{"\",\n  \"password\": \"12345678\"\n}"}</CodeArea>
          </Op>
        </Wrap>
        <Overlay>
          <Modal>
            <ModalHead>
              <ModalTitle>Available authorizations</ModalTitle>
              <ModalClose width="20" height="20" viewBox="0 0 20 20"><path d="M2 2 18 18M18 2 2 18" stroke="#000" strokeWidth="5" /></ModalClose>
            </ModalHead>
            <ModalBody>
              <Scheme><SchemeName>jwt-user</SchemeName><span>(http, Bearer)</span></Scheme>
              <AuthState>Authorized</AuthState>
              <ValueRow><ValueLabel>Value:</ValueLabel><ValueStars>******</ValueStars></ValueRow>
              <ModalBtns>
                <ModalBtn $c="#2060c8" $w={195}>Logout</ModalBtn>
                <ModalBtn $c="#808080" $w={177}>Close</ModalBtn>
              </ModalBtns>
            </ModalBody>
          </Modal>
        </Overlay>
      </Page>
    </Window>

    <Dock>
      {dockIcons.map((d, i) => (
        <React.Fragment key={i}>
          {d.sep && <DockSep $l={d.sep[0]} $r={d.sep[1]} />}
          <DockItem $w={d.w}>{d.el}{d.dot && <DockDot />}</DockItem>
        </React.Fragment>
      ))}
    </Dock>
  </Desktop>
);
export default App;
